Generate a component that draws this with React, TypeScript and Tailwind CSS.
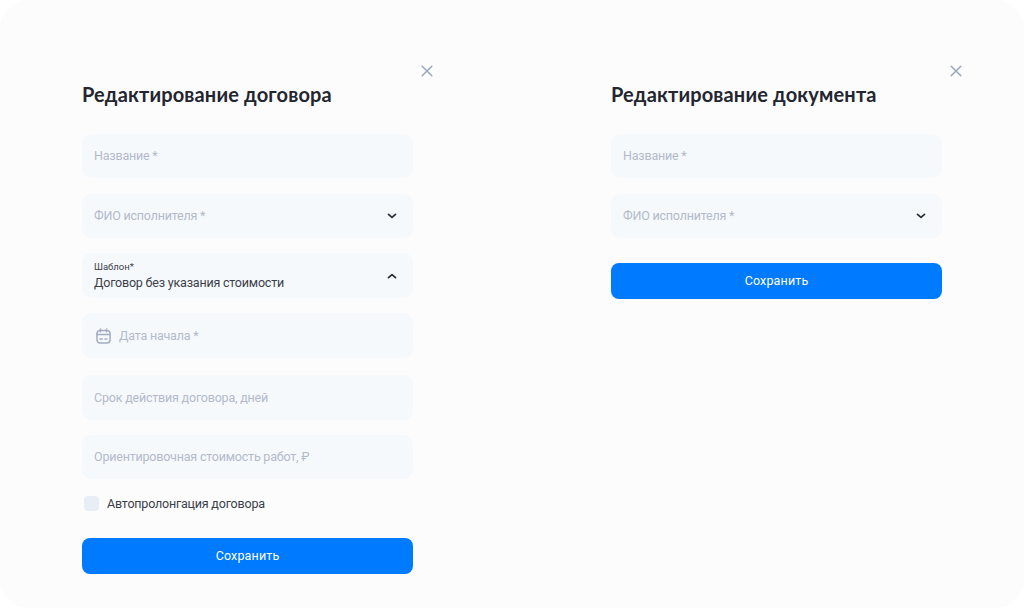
import React from "react";

const body = "font-['Roboto','Noto_Sans',sans-serif]";

function Chevron({ up = false }: { up?: boolean }) {
  return (
    <svg width="12" height="12" viewBox="0 0 12 12" fill="none" className="shrink-0">
      <path d={up ? "M2.5 7.6 6 4.6l3.5 3" : "M2.5 4.4 6 7.4l3.5-3"} stroke="#2b2e38" strokeWidth="1.8" strokeLinecap="round" strokeLinejoin="round" />
    </svg>
  );
}

function Close() {
  return (
    <svg width="12" height="12" viewBox="0 0 12 12" fill="none">
      <path d="M1.2 1.2l9.6 9.6M10.8 1.2l-9.6 9.6" stroke="#9AA6C0" strokeWidth="1.5" strokeLinecap="round" />
    </svg>
  );
}

function Calendar() {
  return (
    <svg width="15" height="16" viewBox="0 0 16 17" fill="none" className="ml-0.5 shrink-0">
      <rect x="1" y="2.6" width="14" height="13.4" rx="3.4" stroke="#A3ADC4" strokeWidth="1.6" />
      <path d="M1 6.8h14M4.8 1v3M11.2 1v3M4.2 11.6h2.6M9.6 11.6h2" stroke="#A3ADC4" strokeWidth="1.6" strokeLinecap="round" />
    </svg>
  );
}

function Field({ label, h = "h-11", mb, chevron, icon }: { label: string; h?: string; mb: string; chevron?: boolean; icon?: boolean }) {
  return (
    <div className={`flex ${h} ${mb} items-center justify-between rounded-[9px] bg-[#f6f9fc] pl-3 pr-[15px]`}>
      <div className="flex items-center gap-2">
        {icon && <Calendar />}
        <span className="pt-px text-[12.5px] leading-none tracking-[-0.2px] text-[#b3bacb]">{label}</span>
      </div>
      {chevron && <Chevron />}
    </div>
  );
}

function SaveButton() {
  return (
    <button className="flex h-9 w-full items-center justify-center rounded-[8px] bg-[#007aff] pt-px text-[12.5px] font-normal tracking-[0.15px] text-white">
      Сохранить
    </button>
  );
}

function Title({ children }: { children: React.ReactNode }) {
  return (
    <div className="mb-[28px] flex h-[24px] items-center font-['Lato',sans-serif] text-[20px] font-bold leading-none tracking-[0.15px] text-[#23262f]">
      {children}
    </div>
  );
}

function CloseRow() {
  return (
    <div className="-mr-5 mb-[5px] flex h-3 justify-end">
      <Close />
    </div>
  );
}

export default function App() {
  return (
    <div className="h-[608px] w-[1024px] bg-white">
      <div className={`flex h-full items-start gap-[198px] rounded-[28px] bg-[#fcfcfd] pl-[82px] pt-[65px] ${body}`}>
        <div className="w-[331px]">
          <CloseRow />
          <Title>Редактирование договора</Title>
          <Field label="Название *" mb="mb-4" />
          <Field label="ФИО исполнителя *" mb="mb-[15px]" chevron />
          <div className="mb-[15px] flex h-[45px] items-center justify-between rounded-[9px] bg-[#f6f9fc] pl-3 pr-[15px]">
            <div className="flex flex-col gap-[3px]">
              <span className="text-[9.5px] leading-[11px] text-[#3b3f4a]">Шаблон*</span>
              <span className="text-[12.5px] leading-[15px] tracking-[-0.2px] text-[#3b3f4a]">Договор без указания стоимости</span>
            </div>
            <Chevron up />
          </div>
          <Field label="Дата начала *" h="h-[45px]" mb="mb-[17px]" icon />
          <Field label="Срок действия договора, дней" h="h-[45px]" mb="mb-[15px]" />
          <Field label="Ориентировочная стоимость работ, ₽" mb="mb-4" />
          <div className="mb-[26px] flex h-[17px] items-center gap-2 pl-0.5">
            <span className="h-[15px] w-[15px] rounded-[4px] bg-[#e8edf6]" />
            <span className="pt-px text-[12.5px] leading-none tracking-[-0.2px] text-[#3b3f4a]">Автопролонгация договора</span>
          </div>
          <SaveButton />
        </div>
        <div className="w-[331px]">
          <CloseRow />
          <Title>Редактирование документа</Title>
          <Field label="Название *" mb="mb-4" />
          <Field label="ФИО исполнителя *" mb="mb-[25px]" chevron />
          <SaveButton />
        </div>
      </div>
    </div>
  );
}
